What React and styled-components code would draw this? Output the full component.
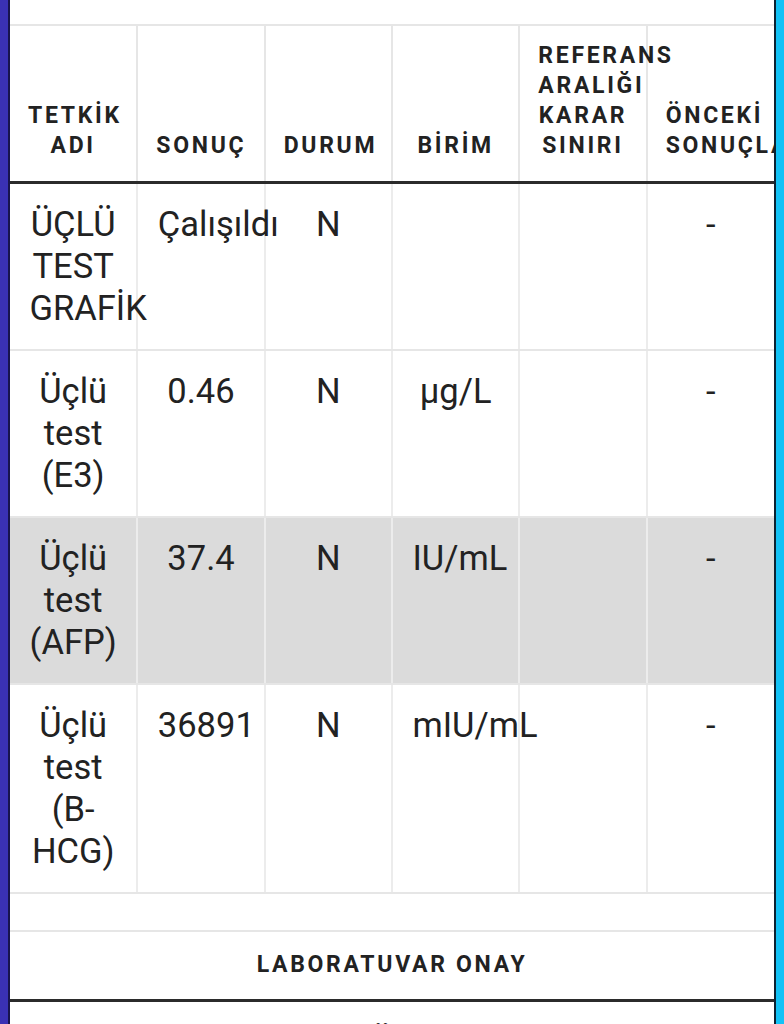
import React from "react";
import styled, { createGlobalStyle } from "styled-components";

const GlobalStyle = createGlobalStyle`
  html, body {
    margin: 0;
    padding: 0;
    background: #ffffff;
  }
  body {
    font-family: Roboto, "Noto Sans", "Liberation Sans", sans-serif;
    color: #222222;
  }
`;

const Page = styled.div`
  box-sizing: border-box;
  width: 784px;
  height: 1024px;
  display: flex;
  overflow: hidden;
  border-left: 8px solid #3a31b4;
  border-right: 8px solid #12c2f6;
`;

const Sheet = styled.div`
  flex: 1;
  min-width: 0;
  overflow: hidden;
  padding-top: 24px;
  border-left: 2px solid #18144e;
  border-right: 2px solid #0b2232;
  background: #ffffff;
`;

const Table = styled.table`
  width: 764px;
  table-layout: fixed;
  border-collapse: collapse;
  border-top: 2px solid #e6e6e6;
`;

const HeadCell = styled.th`
  vertical-align: bottom;
  text-align: center;
  font-family: Roboto, "Noto Sans", sans-serif;
  font-weight: 700;
  font-size: 23px;
  line-height: 30px;
  letter-spacing: 2.7px;
  color: #222222;
  padding: ${(p) => (p.$wide ? "18px 19px 19px" : "15px 18px 20px")};
  border-bottom: 3px solid #2b2b2b;
  border-left: 2px solid #e6e6e6;
  &:first-child {
    border-left: none;
  }
`;

const Row = styled.tr`
  background: ${(p) => (p.$shaded ? "#dbdbdb" : "#ffffff")};
`;

const Cell = styled.td`
  vertical-align: top;
  text-align: center;
  font-size: 34.5px;
  line-height: 42px;
  font-weight: 400;
  color: #222222;
  padding: 19px 19.5px 20px;
  border-bottom: 2px solid #e6e6e6;
  border-left: 2px solid #ececec;
  &:first-child {
    border-left: none;
  }
`;

const Spacer = styled.div`
  height: 36px;
`;

const rows = [
  { name: "ÜÇLÜ TEST GRAFİK", result: "Çalışıldı", status: "N", unit: "", ref: "", prev: "-" },
  { name: "Üçlü test (E3)", result: "0.46", status: "N", unit: "µg/L", ref: "", prev: "-" },
  { name: "Üçlü test (AFP)", result: "37.4", status: "N", unit: "IU/mL", ref: "", prev: "-", shaded: true },
  { name: "Üçlü test (B-HCG)", result: "36891", status: "N", unit: "mIU/mL", ref: "", prev: "-" },
];

const headers = [
  "TETKİK ADI",
  "SONUÇ",
  "DURUM",
  "BİRİM",
  "REFERANS ARALIĞI KARAR SINIRI",
  "ÖNCEKİ SONUÇLARI",
];

export default function App() {
  return (
    <>
      <GlobalStyle />
      <Page>
        <Sheet>
          <Table>
            <thead>
              <tr>
                {headers.map((h) => (
                  <HeadCell key={h}>{h}</HeadCell>
                ))}
              </tr>
            </thead>
            <tbody>
              {rows.map((r) => (
                <Row key={r.name} $shaded={r.shaded}>
                  <Cell>{r.name}</Cell>
                  <Cell>{r.result}</Cell>
                  <Cell>{r.status}</Cell>
                  <Cell>{r.unit}</Cell>
                  <Cell>{r.ref}</Cell>
                  <Cell>{r.prev}</Cell>
                </Row>
              ))}
            </tbody>
          </Table>
          <Spacer />
          <Table>
            <thead>
              <tr>
                <HeadCell colSpan={6} $wide>
                  LABORATUVAR ONAY
                </HeadCell>
              </tr>
            </thead>
            <tbody>
              <Row>
                <Cell colSpan={6}>ÜZ</Cell>
              </Row>
            </tbody>
          </Table>
        </Sheet>
      </Page>
    </>
  );
}
